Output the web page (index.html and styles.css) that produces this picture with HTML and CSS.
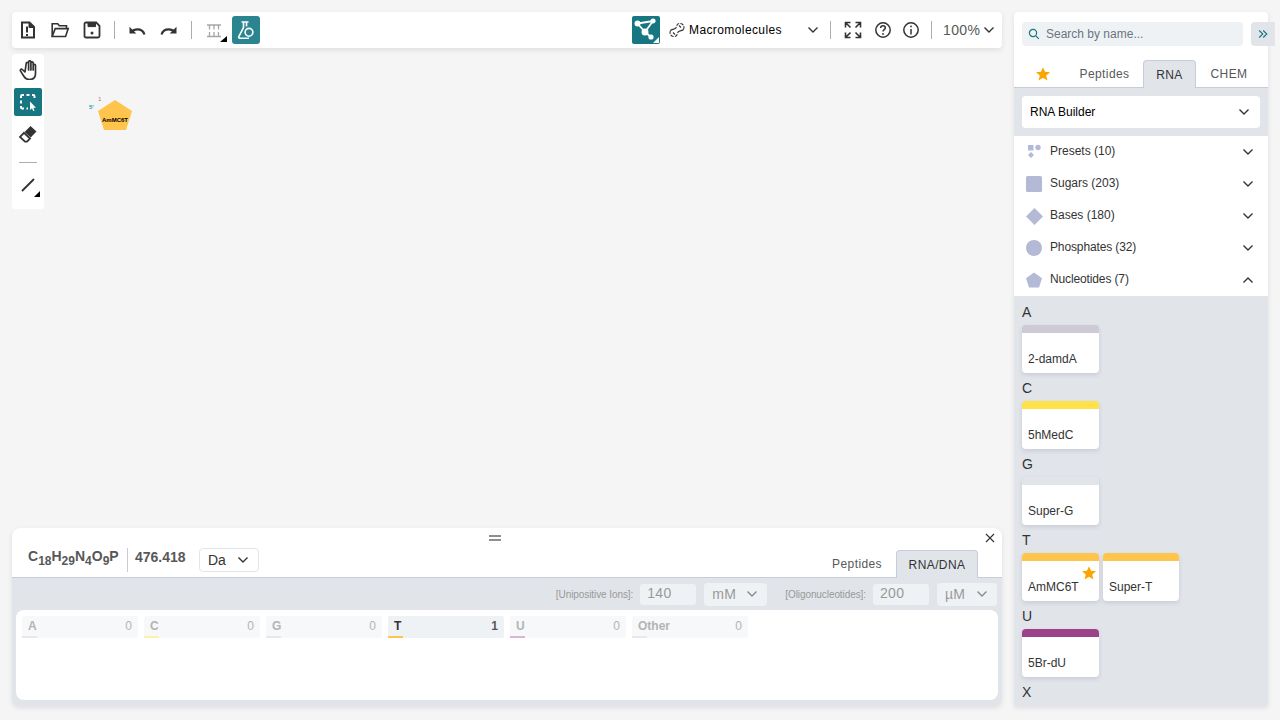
FILE: index.html
```html
<!DOCTYPE html>
<html lang="en">
<head>
<meta charset="utf-8">
<title>Macromolecules editor</title>
<link rel="stylesheet" href="styles.css">
</head>
<body>
<div class="app">
  <main class="main">
    <header class="toolbar">
      <div class="tgroup">
        <button class="tbtn"><svg width="20" height="20" viewBox="0 0 20 20" fill="none" stroke="#333" stroke-width="2"><path d="M4 2.500h7.500l4.500 4.500v10.500H4z"/><path d="M11 2.500V7.500h5" fill="#333" stroke-width="1"/><path d="M9 6.500v6M9 14v2" stroke-width="2"/></svg></button>
        <button class="tbtn"><svg width="20" height="20" viewBox="0 0 20 20" fill="none" stroke="#333" stroke-width="1.600"><path d="M2.200 16.500V3.800h5.500l1.600 2h7.200v2.800"/><path d="M2.200 16.500h13.400l2.600-7.900H5.200z"/></svg></button>
        <button class="tbtn"><svg width="20" height="20" viewBox="0 0 20 20" fill="none" stroke="#333" stroke-width="1.800"><path d="M4 2.500h10.200l3.300 3.300V16a1.500 1.500 0 0 1-1.500 1.500H4A1.500 1.500 0 0 1 2.500 16V4A1.500 1.500 0 0 1 4 2.500z"/><path d="M6 3v3.600h7.500V3" fill="#333" stroke-width="1"/><circle cx="10" cy="13" r="1.500" fill="#333" stroke="none"/></svg></button>
        <span class="vsep"></span>
        <button class="tbtn"><svg width="20" height="20" viewBox="0 0 20 20" fill="none" stroke="#333"><path d="M17.500 14.500c-1-3.200-3.800-5.200-7.200-5.200-2 0-3.800.6-5.300 1.900" stroke-width="2.200"/><path d="M2.500 6.800v6.800h6.800z" fill="#333" stroke="none"/></svg></button>
        <button class="tbtn"><svg width="20" height="20" viewBox="0 0 20 20" fill="none" stroke="#333"><path d="M2.500 14.500c1-3.200 3.800-5.200 7.200-5.200 2 0 3.800.6 5.300 1.900" stroke-width="2.200"/><path d="M17.500 6.800v6.800h-6.800z" fill="#333" stroke="none"/></svg></button>
        <span class="vsep"></span>
        <button class="tbtn tri"><svg width="20" height="20" viewBox="0 0 20 20" fill="none" stroke="#a6a6a6" stroke-width="1.300"><path d="M3 5h14M5.500 5v4.500M10 5v4.500M14.500 5v4.500M5.500 12v4.500M10 12v4.500M14.500 12v4.500M3 16.500h14"/></svg></button>
        <button class="tbtn flask"><svg width="20" height="20" viewBox="0 0 20 20" fill="none" stroke="#fff" stroke-width="1.600"><path d="M5.500 2h7M7.500 2.200v5.300L2.800 16.600c-.4.800.1 1.600.9 1.600h9.300"/><path d="M10.500 2.200v4.200"/><circle cx="13" cy="12.300" r="3.900"/></svg></button>
      </div>
      <div class="tgroup right">
        <button class="tbtn macro"><svg width="24" height="24" viewBox="0 0 24 24" fill="#fff" stroke="#fff" stroke-width="1.800"><path d="M3.500 5.500L19 3 11 14l6 5M3.500 5.500L11 14" fill="none"/><circle cx="3.500" cy="5.500" r="2.100"/><circle cx="19" cy="3" r="1.700"/><circle cx="11" cy="14" r="2.600"/><circle cx="17" cy="19" r="1.700"/></svg></button>
        <div class="modesel">
          <svg width="16" height="16" viewBox="0 0 16 16" fill="none" stroke="#333" stroke-width="1.100"><path d="M1.500 8.500C.3 11 1.200 14.500 5 14.500c3 0 3.500-2.500 4-4.500" stroke-dasharray="3.500 1.100"/><path d="M14.500 7.500c1.200-2.500.3-6-3.500-6-3 0-3.500 2.500-4 4.500" stroke-dasharray="3.500 1.100"/><path d="M1.500 8.500c1.200-1.200 3.700-1 5.500-2.500M14.500 7.500c-1.200 1.200-3.700 1-5.500 2.500M4 10.500l2 2M10 3.500l2 2"/></svg>
          <span class="modetxt">Macromolecules</span>
          <svg class="chev" width="12" height="8" viewBox="0 0 12 8"><path d="M1.500 1.500L6 6l4.500-4.500"/></svg>
        </div>
        <span class="vsep wide"></span>
        <button class="tbtn full"><svg width="20" height="20" viewBox="0 0 20 20" fill="none" stroke="#333" stroke-width="1.600"><path d="M2.500 7.500v-5h5M2.500 2.500l5 5M17.500 7.500v-5h-5M17.500 2.500l-5 5M2.500 12.500v5h5M2.500 17.500l5-5M17.500 12.500v5h-5M17.500 17.500l-5-5"/></svg></button>
        <button class="tbtn"><svg width="20" height="20" viewBox="0 0 20 20" fill="none" stroke="#333" stroke-width="1.500"><circle cx="10" cy="10" r="7.200"/><path d="M7.700 8c0-1.400 1-2.200 2.300-2.200s2.300.9 2.300 2.100c0 1.800-2.300 1.800-2.300 3.600"/><circle cx="10" cy="14" r=".9" fill="#333" stroke="none"/></svg></button>
        <button class="tbtn"><svg width="20" height="20" viewBox="0 0 20 20" fill="none" stroke="#333" stroke-width="1.500"><circle cx="10" cy="10" r="7.200"/><path d="M10 9v5.500"/><circle cx="10" cy="6.400" r=".9" fill="#333" stroke="none"/></svg></button>
        <span class="vsep last"></span>
        <div class="zoomsel"><span>100%</span><svg class="chev" width="12" height="8" viewBox="0 0 12 8"><path d="M1.500 1.500L6 6l4.500-4.500"/></svg></div>
      </div>
    </header>

    <section class="workspace">
      <aside class="tools">
        <button class="tbtn"><svg width="18" height="20" viewBox="0 0 18 20" fill="none" stroke="#333" stroke-width="1.700" stroke-linecap="round" stroke-linejoin="round"><path d="M6 12L3.300 9.500c-1-.9-2.500.3-1.700 1.600L5 16.500c1.200 2 3 3 5.500 3 4 0 6-2.500 6-6V5.500c0-1.600-2.300-1.600-2.300 0V10V3c0-1.600-2.300-1.600-2.300 0v7V2c0-1.600-2.300-1.600-2.300 0v8V3.500c0-1.600-2.400-1.600-2.400 0z"/></svg></button>
        <button class="tbtn selbtn"><svg width="20" height="20" viewBox="0 0 20 20" fill="none" stroke="#fff" stroke-width="2"><path d="M3 6V4.300C3 3.600 3.600 3 4.300 3H6M8.500 3h3M14 3h1.200c.7 0 1.300.6 1.300 1.300V6M3 8.500v3M3 14v1.200c0 .7.6 1.300 1.300 1.300H6M8.500 16.500H10"/><path d="M12 9.500v8.500l2-1.800 1.200 2.800 1.400-.6-1.200-2.700H18z" fill="#fff" stroke="none"/></svg></button>
        <button class="tbtn"><svg width="20" height="20" viewBox="0 0 20 20"><path d="M12.500 2l6 5.500-5.800 6L6.600 7.900z" fill="#333"/><path d="M6 8.800l6 5.700-3 3.200H7L2 13z" fill="none" stroke="#333" stroke-width="1.800"/></svg></button>
        <span class="hsep"></span>
        <button class="tbtn tri low"><svg width="20" height="20" viewBox="0 0 20 20" fill="none" stroke="#333" stroke-width="1.800" stroke-linecap="round"><path d="M4.500 15.500L15.500 4.500"/></svg></button>
      </aside>
      <svg class="molecule" width="60" height="45" viewBox="0 0 60 45">
        <path d="M35 10l17 11-6 19H24l-6-19z" fill="#ffc44c"/>
        <text x="35" y="32" class="monolabel" text-anchor="middle">AmMC6T</text>
        <text x="9" y="19" class="fivep">5'</text>
        <text x="18" y="11" class="seqnum">1</text>
      </svg>
    </section>

    <section class="panel">
      <div class="phead">
        <div class="formula">C<sub>18</sub>H<sub>29</sub>N<sub>4</sub>O<sub>9</sub>P</div>
        <span class="fsep"></span>
        <div class="mass">476.418</div>
        <div class="dasel"><span>Da</span><svg class="chev" width="12" height="8" viewBox="0 0 12 8"><path d="M1.500 1.500L6 6l4.500-4.500"/></svg></div>
        <div class="ptabs">
          <span class="ptab">Peptides</span>
          <span class="ptab active">RNA/DNA</span>
        </div>
      </div>
      <div class="pctrl">
        <label class="clabel">[Unipositive Ions]:</label>
        <span class="cinput">140</span>
        <span class="csel first"><span>mM</span><svg class="chev" width="12" height="8" viewBox="0 0 12 8"><path d="M1.500 1.500L6 6l4.500-4.500"/></svg></span>
        <label class="clabel">[Oligonucleotides]:</label>
        <span class="cinput">200</span>
        <span class="csel"><span>µM</span><svg class="chev" width="12" height="8" viewBox="0 0 12 8"><path d="M1.500 1.500L6 6l4.500-4.500"/></svg></span>
      </div>
      <div class="pcard">
        <div class="cell"><b>A</b><span>0</span><i class="ua"></i></div>
        <div class="cell"><b>C</b><span>0</span><i class="uc"></i></div>
        <div class="cell"><b>G</b><span>0</span><i class="ug"></i></div>
        <div class="cell on"><b>T</b><span>1</span><i class="ut"></i></div>
        <div class="cell"><b>U</b><span>0</span><i class="uu"></i></div>
        <div class="cell"><b>Other</b><span>0</span><i class="ug"></i></div>
      </div>
      <button class="grip"></button>
      <button class="closex"><svg width="10" height="10" viewBox="0 0 10 10" stroke="#333" stroke-width="1.100"><path d="M1 1l8 8M9 1l-8 8"/></svg></button>
    </section>
  </main>

  <aside class="lib">
    <div class="searchrow">
      <div class="search"><svg width="12" height="12" viewBox="0 0 12 12" fill="none" stroke="#167782" stroke-width="1.200"><circle cx="5" cy="5" r="3.600"/><path d="M7.800 7.800l3 3"/></svg><span>Search by name...</span></div>
      <button class="collapse"><svg width="10" height="10" viewBox="0 0 10 10" fill="none" stroke="#167782" stroke-width="1.100"><path d="M1.200 1.500L4.800 5 1.200 8.500M5.200 1.500L8.800 5 5.200 8.500"/></svg></button>
    </div>
    <div class="libtabs">
      <span class="ltab startab"><svg width="16" height="16" viewBox="0 0 16 16"><path class="starp" d="M8 1.200l2 4.600 5 .4-3.800 3.300 1.200 4.900L8 11.800l-4.400 2.600 1.200-4.900L1 6.200l5-.4z"/></svg></span>
      <span class="ltab pep">Peptides</span>
      <span class="ltab active">RNA</span>
      <span class="ltab">CHEM</span>
    </div>
    <div class="builderwrap">
      <div class="builder"><span>RNA Builder</span><svg class="chev" width="12" height="8" viewBox="0 0 12 8"><path d="M1.500 1.500L6 6l4.500-4.500"/></svg></div>
    </div>
    <ul class="acc">
      <li><svg width="16" height="16" viewBox="0 0 16 16" fill="#b4b9d6"><rect x="2" y="1" width="5.500" height="5.500"/><circle cx="12" cy="3.500" r="2.700"/><path d="M5 8l3 3-3 3-3-3z"/></svg><span>Presets (10)</span><svg class="chev" width="12" height="8" viewBox="0 0 12 8"><path d="M1.500 1.500L6 6l4.500-4.500"/></svg></li>
      <li><svg width="16" height="16" viewBox="0 0 16 16" fill="#b4b9d6"><rect width="16" height="16" rx="1.500"/></svg><span>Sugars (203)</span><svg class="chev" width="12" height="8" viewBox="0 0 12 8"><path d="M1.500 1.500L6 6l4.500-4.500"/></svg></li>
      <li><svg width="17" height="17" viewBox="0 0 16 16" fill="#b4b9d6"><path d="M8 0l8 8-8 8-8-8z"/></svg><span class="tight">Bases (180)</span><svg class="chev" width="12" height="8" viewBox="0 0 12 8"><path d="M1.500 1.500L6 6l4.500-4.500"/></svg></li>
      <li><svg width="16" height="16" viewBox="0 0 16 16" fill="#b4b9d6"><circle cx="8" cy="8" r="8"/></svg><span class="narrowtxt">Phosphates (32)</span><svg class="chev" width="12" height="8" viewBox="0 0 12 8"><path d="M1.500 1.500L6 6l4.500-4.500"/></svg></li>
      <li><svg width="16" height="16" viewBox="0 0 16 16" fill="#b4b9d6"><path d="M8 .5l8 5.700-3 9.300H3L0 6.200z"/></svg><span class="narrowtxt">Nucleotides (7)</span><svg class="chev" width="12" height="8" viewBox="0 0 12 8"><path d="M1.500 6.500L6 2l4.500 4.500"/></svg></li>
    </ul>
    <div class="monos">
      <h4>A</h4>
      <div class="cards"><div class="card sa">2-damdA</div></div>
      <h4>C</h4>
      <div class="cards"><div class="card sc">5hMedC</div></div>
      <h4>G</h4>
      <div class="cards"><div class="card sg">Super-G</div></div>
      <h4>T</h4>
      <div class="cards">
        <div class="card st">AmMC6T<svg class="fav" width="16" height="16" viewBox="0 0 16 16"><path class="starp" d="M8 1.200l2 4.600 5 .4-3.800 3.300 1.200 4.900L8 11.800l-4.400 2.600 1.200-4.900L1 6.200l5-.4z"/></svg></div>
        <div class="card st thin">Super-T</div>
      </div>
      <h4>U</h4>
      <div class="cards"><div class="card su">5Br-dU</div></div>
      <h4>X</h4>
    </div>
  </aside>
</div>
</body>
</html>
```
FILE: styles.css
```css
* { box-sizing: border-box; }
html, body { margin: 0; height: 100%; }
body { background: #f5f5f5; font-family: "Liberation Sans", Arial, sans-serif; color: #333; overflow: hidden; }
button { border: 0; background: none; padding: 0; font: inherit; }
svg { display: block; flex: none; }
.chev { fill: none; stroke: #333; stroke-width: 1.4; }
.starp { fill: #faa500; }

.app { display: grid; grid-template-columns: 990px 254px; gap: 12px; padding: 12px; height: 718px; }
.main { display: flex; flex-direction: column; height: 694px; }

.toolbar { height: 36px; flex: none; background: #fff; border-radius: 4px; box-shadow: 0 2px 5px rgba(103,104,132,.15); display: flex; justify-content: space-between; align-items: center; padding: 0 2px; }
.tgroup { display: flex; align-items: center; gap: 4px; }
.tbtn { width: 28px; height: 28px; border-radius: 2px; display: flex; align-items: center; justify-content: center; position: relative; flex: none; }
.vsep { width: 1px; height: 18px; background: #a9adb3; margin: 0 4px; flex: none; }
.tri::after { content: ""; position: absolute; right: 1px; bottom: 2px; border-style: solid; border-width: 0 0 6px 7px; border-color: transparent transparent #000 transparent; }
.tri.low::after { right: 2px; bottom: 2px; border-width: 0 0 6px 6px; }
.flask { background: #2b8590; border-radius: 3px; }
.macro { background: #167782; }
.macro::after { content: ""; position: absolute; right: 1px; bottom: 1px; border-style: solid; border-width: 0 0 6px 6px; border-color: transparent transparent #fff transparent; }
.selbtn { background: #167782; }
.right { gap: 0; }
.modesel { width: 157px; margin-left: 9px; display: flex; align-items: center; font-size: 12px; letter-spacing: .4px; color: #000; }
.modesel svg:first-child { margin-right: 4px; }
.modetxt { flex: 1; }
.modesel .chev { margin-right: 7px; }
.right .vsep.wide { margin: 0 8px 0 4px; }
.full { margin-right: 2px; }
.right .vsep.last { margin: 0 11px 0 6px; }
.zoomsel { display: flex; align-items: center; justify-content: space-between; font-size: 14px; letter-spacing: .4px; color: #585858; width: 52px; margin-right: 5px; }

.workspace { flex: 1; position: relative; min-height: 0; }
.tools { position: absolute; left: 0; top: 6px; width: 32px; height: 155px; background: #fff; border-radius: 4px; display: flex; flex-direction: column; align-items: center; padding-top: 2px; gap: 4px; }
.hsep { width: 18px; height: 1px; background: #a9adb3; margin: 10px 0 4px; flex: none; }
.molecule { position: absolute; left: 68px; top: 42px; }
.monolabel { font: 700 6px "Liberation Sans", Arial, sans-serif; fill: #000; }
.fivep { font: 700 6px "Liberation Sans", Arial, sans-serif; fill: #1f9fad; }
.seqnum { font: 400 6px "Liberation Sans", Arial, sans-serif; fill: #888; }

.panel { height: 178px; flex: none; position: relative; background: #e1e5ea; border-radius: 8px; box-shadow: 0 2px 5px rgba(103,104,132,.15); display: flex; flex-direction: column; overflow: hidden; }
.grip { position: absolute; left: 477px; top: 7px; width: 12px; height: 6px; border-top: 2px solid #8f8f8f; border-bottom: 2px solid #8f8f8f; }
.closex { position: absolute; right: 7px; top: 5px; }
.phead { height: 50px; flex: none; background: #fff; border-bottom: 1px solid #c7cdd8; display: flex; align-items: flex-end; padding-left: 16px; }
.formula { font-size: 14px; font-weight: 700; color: #585858; margin-bottom: 11px; width: 99px; line-height: 20px; white-space: nowrap; }
.formula sub { font-size: 12px; line-height: 0; }
.fsep { width: 1px; height: 24px; background: #c7cdd8; margin-bottom: 5px; flex: none; }
.mass { font-size: 14px; font-weight: 700; color: #585858; margin: 0 13px 10px 7px; line-height: 20px; width: 51px; white-space: nowrap; }
.dasel { width: 60px; height: 24px; border: 1px solid #e1e5ea; border-radius: 4px; display: flex; align-items: center; justify-content: space-between; padding: 0 9px 0 8px; font-size: 14px; margin-bottom: 5px; flex: none; }
.ptabs { margin-left: auto; margin-right: 24px; display: flex; align-items: flex-end; margin-bottom: -1px; }
.ptab { height: 28px; display: flex; align-items: center; padding: 0 14px; font-size: 12px; letter-spacing: .4px; color: #585858; }
.ptab.active { width: 82px; justify-content: center; padding: 0; background: #e1e5ea; border: 1px solid #c7cdd8; border-bottom: 0; border-radius: 4px 4px 0 0; color: #333; }
.pctrl { height: 32px; flex: none; display: flex; align-items: center; justify-content: flex-end; padding: 0 5px 0 0; color: #585858; }
.clabel { font-size: 10px; letter-spacing: -.08px; color: #999; margin-right: 6px; flex: none; }
.cinput { width: 58px; height: 23px; flex: none; border: 1px solid #e1e5ea; border-radius: 4px; background: #eff2f5; color: #999; font-size: 14px; letter-spacing: .3px; padding: 0 7px 2px; display: flex; align-items: center; margin-right: 7px; }
.csel { width: 60px; height: 23px; flex: none; background: #eff2f5; color: #999; border-radius: 4px; font-size: 14px; letter-spacing: .3px; padding: 0 9px 0 8px; display: flex; align-items: center; justify-content: space-between; }
.csel.first { width: 63px; margin-right: 18px; }
.csel .chev { stroke: #8a8a8a; }
.pcard { margin: 0 4px; height: 90px; flex: none; background: #fff; border-radius: 8px; padding: 6px; display: flex; gap: 6px; align-items: flex-start; }
.cell { width: 116px; height: 22px; background: #f6f8f9; border-radius: 2px; position: relative; display: flex; justify-content: space-between; align-items: center; padding: 0 6px 2px; font-size: 12px; color: #b4b4b4; }
.cell b { font-weight: 700; }
.cell i { position: absolute; left: 0; bottom: 0; width: 15px; height: 2px; }
.cell.on { background: #eff2f5; color: #333; }
.cell.on span { font-weight: 700; color: #585858; }
.ua, .ug { background: #e6e8eb; }
.uc { background: #fff1a6; }
.ut { background: #ffc44c; }
.uu { background: #dcb4d4; }

.lib { height: 694px; background: #e1e5ea; border-radius: 4px 4px 2px 2px; box-shadow: 0 2px 5px rgba(103,104,132,.15); display: flex; flex-direction: column; }
.searchrow { height: 48px; flex: none; background: #fff; border-radius: 4px 4px 0 0; display: flex; padding: 10px 0 0 8px; gap: 8px; }
.search { width: 221px; height: 24px; flex: none; background: #eff2f5; border-radius: 4px; display: flex; align-items: center; padding-left: 6px; gap: 6px; font-size: 12px; color: #6b7580; }
.collapse { width: 24px; height: 24px; flex: none; background: #e1e5ea; border-radius: 4px 0 0 4px; display: flex; align-items: center; justify-content: center; }
.libtabs { height: 28px; flex: none; background: #fff; border-bottom: 1px solid #c7cdd8; display: flex; align-items: stretch; }
.ltab { display: flex; align-items: center; justify-content: center; font-size: 12px; letter-spacing: .4px; color: #585858; width: 53px; flex: none; }
.startab { width: 58px; }
.pep { width: 71px; padding-right: 6px; }
.ltab.active { background: #e1e5ea; border: 1px solid #c7cdd8; border-bottom: 0; border-radius: 4px 4px 0 0; color: #333; margin-bottom: -1px; }
.ltab:last-child { width: 66px; }
.builderwrap { height: 48px; flex: none; padding: 8px; }
.builder { height: 32px; background: #fff; border-radius: 4px; display: flex; align-items: center; justify-content: space-between; padding: 0 10px 0 8px; font-size: 12px; color: #000; }
.acc { list-style: none; margin: 0; padding: 0; background: #fff; flex: none; height: 160px; }
.acc li { height: 32px; display: flex; align-items: center; padding: 0 14px 0 12px; font-size: 12px; color: #333; }
.acc li span { flex: 1; margin-left: 8px; margin-top: -2px; }
.acc li span.tight { margin-left: 7px; }
.acc li span.narrowtxt { letter-spacing: -.13px; }
.monos { padding: 1px 8px 0; flex: 1; min-height: 0; overflow: hidden; }
.monos h4 { margin: 0; height: 28px; font-size: 14px; font-weight: 400; line-height: 17px; padding-top: 7px; color: #333; }
.cards { display: flex; gap: 4px; }
.card { width: 77px; height: 48px; background: #fff; border-radius: 4px; box-shadow: 0 2px 4px rgba(103,104,132,.2); border-top: 8px solid; font-size: 12px; padding: 18px 6px 0; line-height: 16px; color: #333; position: relative; flex: none; }
.card.thin { width: 76px; }
.sa { border-top-color: #cdcad6; }
.sc { border-top-color: #ffe14a; }
.sg { border-top-color: #e1e5ea; }
.st { border-top-color: #ffc44c; }
.su { border-top-color: #9c4289; }
.fav { position: absolute; right: 2px; top: 4px; }
```
